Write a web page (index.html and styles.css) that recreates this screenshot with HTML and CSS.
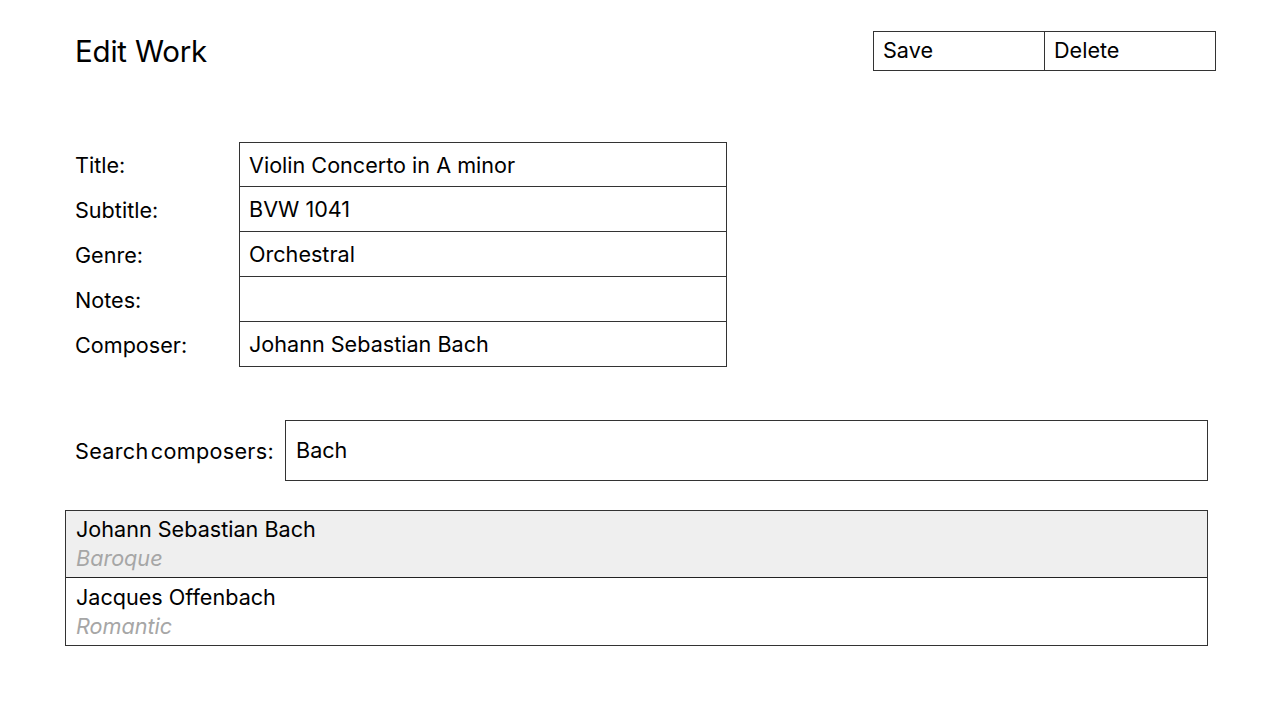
FILE: index.html
```html
<!DOCTYPE html>
<html>
<head>
<meta charset="utf-8">
<link rel="stylesheet" href="styles.css">
</head>
<body>
<div class="page">
  <header class="header">
    <h1 class="title">Edit Work</h1>
    <div class="actions">
      <div class="btn">Save</div>
      <div class="btn">Delete</div>
    </div>
  </header>

  <div class="form">
    <div class="label">Title:</div><div class="field">Violin Concerto in A minor</div>
    <div class="label">Subtitle:</div><div class="field">BVW 1041</div>
    <div class="label">Genre:</div><div class="field">Orchestral</div>
    <div class="label">Notes:</div><div class="field"></div>
    <div class="label">Composer:</div><div class="field">Johann Sebastian Bach</div>
  </div>

  <div class="search">
    <div class="search-label">Search composers:</div>
    <div class="search-input">Bach</div>
  </div>

  <div class="results">
    <div class="result selected">
      <div class="name">Johann Sebastian Bach</div>
      <div class="era">Baroque</div>
    </div>
    <div class="result">
      <div class="name">Jacques Offenbach</div>
      <div class="era">Romantic</div>
    </div>
  </div>
</div>
</body>
</html>
```

FILE: styles.css
```css
* { box-sizing: border-box; }
html, body { margin: 0; padding: 0; background: #fff; }
body {
  font-family: Inter, "Open Sans", "Liberation Sans", sans-serif;
  color: #000;
  font-size: 21.6px;
}
.page {
  width: 1280px;
  height: 720px;
  padding: 31px 64px 0 75px;
}
.header {
  display: flex;
  justify-content: space-between;
  align-items: flex-start;
}
.title {
  margin: 0;
  font-weight: 400;
  font-size: 29.5px;
  line-height: 40px;
  letter-spacing: -0.2px;
}
.actions {
  display: flex;
  border: 1px solid #333;
}
.btn {
  width: 170px;
  height: 38px;
  padding-left: 9px;
  line-height: 37px;
}
.btn + .btn {
  width: 171px;
  border-left: 1px solid #333;
}

.form {
  margin-top: 71px;
  display: grid;
  grid-template-columns: 164px 488px;
}
.label {
  height: 45px;
  line-height: 46px;
}
.field {
  height: 45px;
  line-height: 44px;
  padding-left: 9px;
  border: 1px solid #333;
  border-top: none;
}
.field:nth-child(2) { border-top: 1px solid #333; }

.search {
  margin-top: 53px;
  display: flex;
  align-items: center;
}
.search-label {
  width: 210px;
  letter-spacing: 0.3px;
  word-spacing: -4px;
}
.search-input {
  width: 923px;
  height: 61px;
  line-height: 59px;
  padding-left: 10px;
  border: 1px solid #333;
}

.results {
  margin-top: 29px;
  margin-left: -10px;
  width: 1143px;
  border: 1px solid #333;
}
.result {
  height: 66px;
  padding: 4px 0 0 10px;
}
.result + .result {
  height: 68px;
  padding-top: 5px;
  border-top: 1px solid #222;
}
.result.selected { background: #efefef; }
.name { line-height: 29px; }
.era {
  font-style: italic;
  color: #a6a6a6;
  line-height: 29px;
}
```
